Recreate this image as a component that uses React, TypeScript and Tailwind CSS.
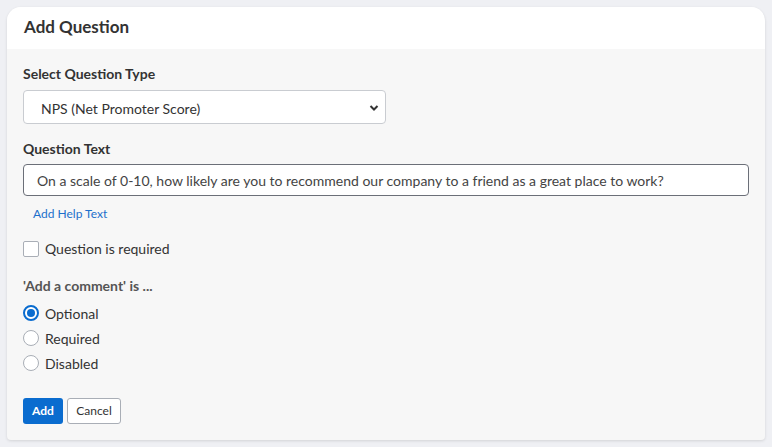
export default function App() {
  return (
    <div
      className="h-[447px] w-[772px] bg-[#eff0f4] pl-[7px] pt-[7px]"
      style={{ fontFamily: "Lato, 'Noto Sans', sans-serif" }}
    >
      <div className="flex h-[433px] w-[758px] flex-col overflow-hidden rounded-t-[14px] rounded-b-[4px] bg-[#f7f7f7] shadow-[0_1px_3px_rgba(0,0,0,0.12)]">
        {/* Header */}
        <div className="flex h-[42px] items-center bg-white px-[17px] pb-[2px]">
          <h1 className="text-[17px] font-bold text-[#333]">Add Question</h1>
        </div>

        {/* Body */}
        <div className="flex flex-col px-[16px] pt-[16px]">
          <label className="text-[14px] font-bold leading-[18px] text-[#333]">Select Question Type</label>
          <div className="relative mt-[7px] h-[34px] w-[363px] rounded-[4px] border border-[#c9ccd1] bg-white">
            <span className="absolute left-[17px] top-[7px] text-[14px] text-[#333]">NPS (Net Promoter Score)</span>
            <svg
              className="absolute right-[6px] top-[12px]"
              width="10"
              height="10"
              viewBox="0 0 10 10"
              fill="none"
              stroke="#333"
              strokeWidth="2"
            >
              <path d="M1.5 3 L5 6.5 L8.5 3" />
            </svg>
          </div>

          <label className="mt-[16px] text-[14px] font-bold leading-[18px] text-[#333]">Question Text</label>
          <div className="mt-[6px] flex h-[32px] w-[726px] items-center rounded-[4px] border border-[#6b6f78] bg-white px-[13px] text-[14px] text-[#444]">
            On a scale of 0-10, how likely are you to recommend our company to a friend as a great place to work?
          </div>
          <a className="ml-[10px] mt-[9px] text-[12px] text-[#1c6fcb]">Add Help Text</a>

          <div className="mt-[15px] flex items-center gap-[6px]">
            <div className="h-[16px] w-[16px] rounded-[2px] border border-[#a9aeb6] bg-white" />
            <span className="text-[14px] text-[#333]">Question is required</span>
          </div>

          <label className="mt-[18px] text-[14px] font-bold leading-[18px] text-[#555]">'Add a comment' is ...</label>
          <div className="mt-[10px] flex flex-col gap-[9px]">
            {[
              { label: "Optional", checked: true },
              { label: "Required", checked: false },
              { label: "Disabled", checked: false },
            ].map((o) => (
              <div key={o.label} className="flex h-[16px] items-center gap-[6px]">
                {o.checked ? (
                  <div className="flex h-[16px] w-[16px] items-center justify-center rounded-full border-2 border-[#0a6ccf] bg-white">
                    <div className="h-[8px] w-[8px] rounded-full bg-[#0a6ccf]" />
                  </div>
                ) : (
                  <div className="h-[16px] w-[16px] rounded-full border border-[#a9aeb6] bg-white" />
                )}
                <span className="text-[14px] text-[#333]">{o.label}</span>
              </div>
            ))}
          </div>

          <div className="mt-[27px] flex gap-[4px]">
            <button className="h-[26px] w-[40px] rounded-[3px] bg-[#0a6ccf] text-[12px] font-bold text-white">Add</button>
            <button className="h-[26px] w-[54px] rounded-[3px] border border-[#a9aeb6] bg-white text-[12px] text-[#333]">
              Cancel
            </button>
          </div>
        </div>
      </div>
    </div>
  )
}
